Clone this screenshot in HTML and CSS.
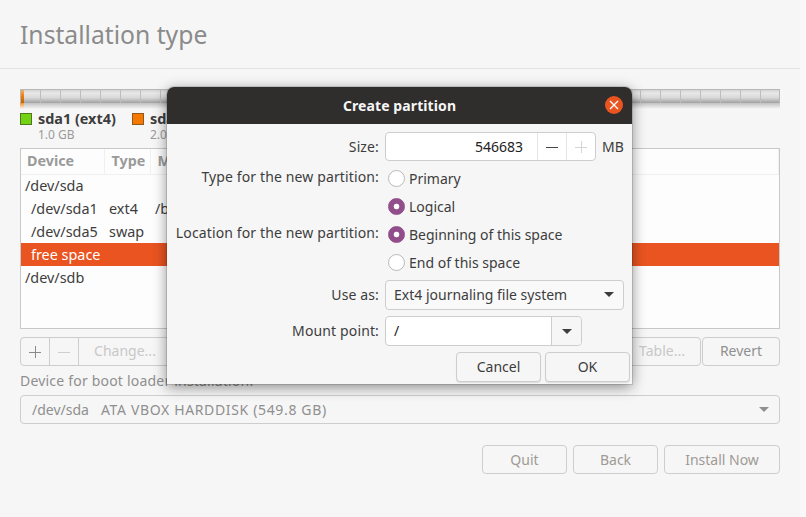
FILE: index.html

```html
<!DOCTYPE html>
<html lang="en">
<head>
  <meta charset="UTF-8" />
  <title>Installation type</title>
  <link rel="stylesheet" href="styles.css">
</head>
<body>
  <div class="page">
    <h1 class="title">Installation type</h1>
    <div class="content">
      <div class="bar"><span class="bar-used"></span></div>
      <div class="legend">
        <div class="legend-item">
          <span class="swatch green"></span>
          <div><b>sda1 (ext4)</b><small>1.0 GB</small></div>
        </div>
        <div class="legend-item">
          <span class="swatch orange"></span>
          <div><b>sda5</b><small>2.0 GB</small></div>
        </div>
      </div>

      <div class="table-box">
        <table class="parts">
          <colgroup><col class="col-device"><col class="col-type"><col></colgroup>
          <thead>
            <tr><th>Device</th><th>Type</th><th>Mount point</th></tr>
          </thead>
          <tbody>
            <tr><td>/dev/sda</td><td></td><td></td></tr>
            <tr><td class="sub">/dev/sda1</td><td>ext4</td><td>/boot</td></tr>
            <tr><td class="sub">/dev/sda5</td><td>swap</td><td></td></tr>
            <tr class="selected"><td class="sub">free space</td><td></td><td></td></tr>
            <tr><td>/dev/sdb</td><td></td><td></td></tr>
          </tbody>
        </table>
      </div>

      <div class="toolbar">
        <div class="btn-group">
          <button class="btn icon-btn dark-icon"><svg width="12" height="12" viewBox="0 0 12 12"><path d="M0 6.500h12M6.500 0v12" stroke="currentColor" fill="none"/></svg></button>
          <button class="btn icon-btn"><svg width="12" height="12" viewBox="0 0 12 12"><path d="M0 6.500h12" stroke="currentColor" fill="none"/></svg></button>
          <button class="btn change-btn">Change...</button>
        </div>
        <div class="btn-group right">
          <button class="btn new-table">Partition Table...</button>
          <button class="btn revert">Revert</button>
        </div>
      </div>

      <div class="boot-label">Device for boot loader installation:</div>
      <div class="boot-combo">
        <span class="boot-dev">/dev/sda</span>
        <span class="boot-name">ATA VBOX HARDDISK (549.8 GB)</span>
        <span class="caret gray"></span>
      </div>

      <div class="actions">
        <button class="btn act quit">Quit</button>
        <button class="btn act back">Back</button>
        <button class="btn act install">Install Now</button>
      </div>
    </div>
  </div>

  <div class="dialog">
    <div class="dialog-head">
      <span class="dialog-title">Create partition</span>
      <span class="close">
        <svg width="10" height="10" viewBox="0 0 10 10"><path d="M1 1l8 8M9 1l-8 8" stroke="#fff" stroke-width="1.3" fill="none"/></svg>
      </span>
    </div>
    <div class="dialog-body">
      <label class="f-label">Size:</label>
      <div class="size-row">
        <div class="spin">
          <span class="spin-value">546683</span>
          <span class="spin-btn"><svg width="12" height="12" viewBox="0 0 12 12"><path d="M0 6.500h12" stroke="#444" fill="none"/></svg></span>
          <span class="spin-btn"><svg width="12" height="12" viewBox="0 0 12 12"><path d="M0 6.500h12M6.500 0v12" stroke="#d4d4d4" fill="none"/></svg></span>
        </div>
        <span class="unit">MB</span>
      </div>

      <label class="f-label label-type">Type for the new partition:</label>
      <div class="radio"><span class="dot"></span>Primary</div>
      <div class="radio on"><span class="dot"></span>Logical</div>

      <label class="f-label label-loc">Location for the new partition:</label>
      <div class="radio on"><span class="dot"></span>Beginning of this space</div>
      <div class="radio"><span class="dot"></span>End of this space</div>

      <label class="f-label label-use">Use as:</label>
      <div class="combo">Ext4 journaling file system<span class="caret"></span></div>

      <label class="f-label label-mount">Mount point:</label>
      <div class="mount">
        <span class="mount-value">/</span>
        <span class="mount-arrow"><span class="caret"></span></span>
      </div>
    </div>
    <div class="dialog-foot">
      <button class="btn foot-btn">Cancel</button>
      <button class="btn foot-btn">OK</button>
    </div>
  </div>
</body>
</html>
```

FILE: styles.css

```css
* { box-sizing: border-box; }
html, body { margin: 0; height: 100%; }
body {
  font-family: "Noto Sans", sans-serif;
  font-size: 14px;
  color: #3d3d3d;
  background: #f8f8f8;
  overflow: hidden;
}
.page { width: 800px; height: 517px; background: #f6f6f6; }
.title {
  margin: 0;
  height: 69px;
  padding: 18px 20px 0;
  font-size: 24.7px;
  line-height: 34px;
  font-weight: 400;
  color: #8b8b8b;
  border-bottom: 1px solid #e2e2e2;
}
.content { padding: 20px 20px 0; }

.bar {
  height: 14px;
  border: 1px solid #b8b8b8;
  border-bottom: 0;
  background:
    repeating-linear-gradient(90deg, transparent 0 19px, #bdbdbd 19px 20px),
    linear-gradient(#d4d4d4, #e8e8e8 25%, #d8d8d8 60%, #a0a0a0);
  position: relative;
}
.bar::after {
  content: "";
  position: absolute;
  left: -1px;
  right: -1px;
  top: 13px;
  height: 6px;
  background:
    linear-gradient(rgba(246, 246, 246, .2), #f6f6f6),
    linear-gradient(90deg, #f57900 0 4px, transparent 4px),
    #b4b4b4;
}
.bar-used {
  display: block;
  width: 3px;
  height: 100%;
  background: linear-gradient(#e9b26a, #f57900 50%, #b06a10);
}

.legend { display: flex; gap: 16px; margin-top: 8px; }
.legend-item { display: flex; gap: 6px; width: 96px; white-space: nowrap; }
.swatch { flex: none; width: 12px; height: 12px; margin-top: 2px; border: 1px solid #4e7a1a; }
.green { background: #73d216; }
.orange { background: #f57900; border-color: #8f5a1a; }
.legend b { display: block; font-size: 14.400px; line-height: 15px; color: #3d3d3d; }
.legend small { display: block; font-size: 12px; line-height: 15px; margin-top: 1px; color: #9a9a9a; }

.table-box {
  height: 181px;
  margin-top: 6px;
  background: #fdfdfd;
  border: 1px solid #c8c8c8;
}
.parts { width: 100%; table-layout: fixed; border-collapse: collapse; }
.col-device { width: 83px; }
.col-type { width: 46px; }
.parts th {
  height: 25px;
  padding: 0 0 1px 6px;
  text-align: left;
  font-size: 14.300px;
  font-weight: 700;
  color: #9a9a9a;
  border-bottom: 1px solid #f0f0f0;
  border-right: 1px solid #f0f0f0;
  white-space: nowrap;
  overflow: hidden;
}
.parts th + th { padding-left: 7px; }
.parts td {
  height: 23px;
  padding: 0 0 0 4px;
  font-size: 14.400px;
  white-space: nowrap;
  color: #3d3d3d;
}
.parts td + td { padding-left: 5px; }
.parts td.sub { padding-left: 10px; }
.parts .selected { background: #e95420; }
.parts .selected td { color: #fff; }

.btn {
  font: inherit;
  height: 29px;
  padding: 0;
  color: #909090;
  background: #f6f6f6;
  border: 1px solid #cdcdcd;
  border-radius: 4px;
}
.toolbar { display: flex; justify-content: space-between; margin-top: 8px; }
.btn-group { display: flex; }
.btn-group .btn { border-radius: 0; margin-left: -1px; padding-bottom: 2px; }
.btn-group .btn:first-child { border-radius: 4px 0 0 4px; margin-left: 0; }
.btn-group .btn:last-child { border-radius: 0 4px 4px 0; }
.btn-group .icon-btn { display: flex; width: 30px; padding: 0; align-items: center; justify-content: center; color: #cfcfcf; }
.btn-group .dark-icon { color: #8a8a8a; }
.change-btn { width: 94px; color: #c8c8c8; }
.new-table { width: 160px; padding-right: 15px; text-align: right; word-spacing: 5px; color: #c8c8c8; }
.btn-group.right .btn { border-radius: 4px; margin-left: 1px; }
.revert { width: 78px; }

.boot-label { margin-top: 5px; line-height: 19px; letter-spacing: .2px; color: #8f8f8f; }
.boot-combo {
  display: flex;
  align-items: center;
  height: 29px;
  margin-top: 5px;
  padding: 0 11px;
  color: #8f8f8f;
  border: 1px solid #cdcdcd;
  border-radius: 4px;
}
.boot-name { margin-left: 12px; letter-spacing: .65px; }

.caret {
  display: block;
  width: 0;
  height: 0;
  margin-left: auto;
  border: 5px solid transparent;
  border-bottom: 0;
  border-top: 5px solid #3d3d3d;
}
.caret.gray { border-top-color: #8f8f8f; margin-right: -1px; }

.actions { display: flex; justify-content: flex-end; gap: 6px; margin-top: 21px; }
.act { width: 85px; color: #a09a95; }
.install { width: 116px; }

/* dialog lies over the page */
.dialog {
  position: absolute;
  left: 167px;
  top: 87px;
  width: 465px;
  height: 297px;
  background: #f6f6f6;
  border-radius: 7px 7px 0 0;
  box-shadow: 0 3px 14px rgba(0, 0, 0, .45), 0 0 0 1px rgba(0, 0, 0, .12);
}
.dialog-head {
  position: relative;
  height: 37px;
  background: #302d2d;
  border-radius: 7px 7px 0 0;
  text-align: center;
  line-height: 37px;
}
.dialog-title { font-size: 14px; font-weight: 700; letter-spacing: .1px; color: #f6f6f6; }
.close {
  position: absolute;
  left: 438px;
  top: 9px;
  width: 18px;
  height: 18px;
  display: flex;
  align-items: center;
  justify-content: center;
  border-radius: 50%;
  background: #e95420;
}
.dialog-body {
  display: grid;
  grid-template-columns: 212px auto;
  grid-template-rows: 29px 32px 28px 28px 28px 33px 36px;
  column-gap: 6px;
  padding: 8px 8px 0 0;
  justify-content: start;
}
.f-label { grid-column: 1; text-align: right; align-self: center; white-space: nowrap; letter-spacing: .13px; }
.label-type { align-self: start; line-height: 19px; padding-top: 6px; }
.label-loc { align-self: start; line-height: 19px; padding-top: 2px; }
.label-use { margin-top: 2px; }
.label-mount { margin-top: 4px; }
.dialog-body .radio { grid-column: 2; }
.size-row { display: flex; align-items: center; gap: 6px; }
.spin {
  display: flex;
  width: 211px;
  height: 29px;
  background: #fff;
  border: 1px solid #cdcdcd;
  border-radius: 4px;
}
.spin-value { flex: 1; text-align: right; padding-right: 14px; line-height: 27px; color: #222; }
.spin-btn {
  display: flex;
  width: 29px;
  align-items: center;
  justify-content: center;
  border-left: 1px solid #e4e4e4;
}
.radio {
  display: flex;
  align-items: center;
  align-self: end;
  height: 28px;
  gap: 4px;
  padding: 0 0 2px 3px;
}
.dot {
  width: 17px;
  height: 17px;
  background: #fff;
  border: 1px solid #b9b9b9;
  border-radius: 50%;
}
.radio.on .dot { background: radial-gradient(circle, #fff 0 2.500px, #924d8b 3.200px); border-color: #924d8b; }
.combo {
  display: flex;
  align-items: center;
  width: 239px;
  height: 30px;
  margin-top: 3px;
  padding: 0 9px 2px 8px;
  background: #f9f9f9;
  border: 1px solid #cdcdcd;
  border-radius: 4px;
}
.mount {
  display: flex;
  width: 197px;
  height: 30px;
  margin-top: 6px;
  background: #fff;
  border: 1px solid #cdcdcd;
  border-radius: 4px;
}
.mount-value { flex: 1; padding-left: 8px; line-height: 28px; color: #222; }
.mount-arrow {
  display: flex;
  width: 30px;
  align-items: center;
  justify-content: center;
  background: #f6f6f6;
  border-left: 1px solid #cdcdcd;
  border-radius: 0 4px 4px 0;
}
.mount-arrow .caret { margin: 0; }
.dialog-foot { display: flex; justify-content: flex-end; gap: 4px; padding: 6px 2px 0 0; }
.foot-btn { width: 85px; height: 30px; padding-bottom: 2px; color: #3d3d3d; box-shadow: 0 1px 1px rgba(0, 0, 0, .1); }
```
